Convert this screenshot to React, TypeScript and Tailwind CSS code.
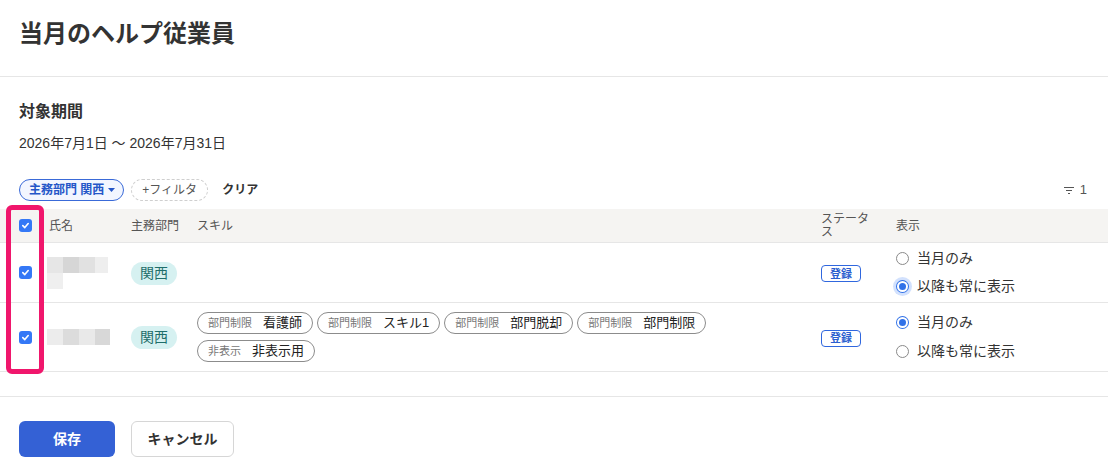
import React from 'react';

const font = { fontFamily: '"Liberation Sans", "Noto Sans CJK JP", "Noto Sans", sans-serif' };

const cols = 'grid grid-cols-[41px_82px_66px_1fr_75px_220px]';

type Skill = { label: string; value: string };

const rows: {
  name: { w: number; c: string }[][];
  skills: Skill[];
  display: 'month' | 'always';
  focus?: boolean;
}[] = [
  {
    name: [
      [
        { w: 16, c: '#e6e6e6' },
        { w: 16, c: '#d6d6d6' },
        { w: 16, c: '#e1e1e1' },
        { w: 13, c: '#eeeeee' },
      ],
      [{ w: 16, c: '#efefef' }],
    ],
    skills: [],
    display: 'always',
    focus: true,
  },
  {
    name: [
      [
        { w: 16, c: '#ececec' },
        { w: 16, c: '#dcdcdc' },
        { w: 16, c: '#e9e9e9' },
        { w: 15, c: '#d8d8d8' },
      ],
    ],
    skills: [
      { label: '部門制限', value: '看護師' },
      { label: '部門制限', value: 'スキル1' },
      { label: '部門制限', value: '部門脱却' },
      { label: '部門制限', value: '部門制限' },
      { label: '非表示', value: '非表示用' },
    ],
    display: 'month',
  },
];

function Checkbox() {
  return (
    <span className="flex h-[13px] w-[13px] items-center justify-center rounded-[3px] bg-[#3478f6]">
      <svg width="9" height="9" viewBox="0 0 10 10" fill="none">
        <path d="M2 5.2 L4.2 7.3 L8 2.8" stroke="white" strokeWidth="1.8" strokeLinecap="round" strokeLinejoin="round" />
      </svg>
    </span>
  );
}

function Radio({ checked, focus }: { checked: boolean; focus?: boolean }) {
  if (!checked) {
    return <span className="h-[13px] w-[13px] shrink-0 rounded-full border border-[#8a8a8a] bg-white" />;
  }
  return (
    <span
      className={
        'flex h-[13px] w-[13px] shrink-0 items-center justify-center rounded-full bg-[#3071e8] ' +
        (focus ? 'shadow-[0_0_0_3px_rgba(52,120,246,0.22)]' : '')
      }
    >
      <span className="flex h-[11px] w-[11px] items-center justify-center rounded-full bg-white">
        <span className="h-[7px] w-[7px] rounded-full bg-[#3071e8]" />
      </span>
    </span>
  );
}

function Blur({ lines }: { lines: { w: number; c: string }[][] }) {
  return (
    <div className="flex flex-col -ml-[2px]">
      {lines.map((line, i) => (
        <div key={i} className="flex">
          {line.map((b, j) => (
            <span key={j} className="h-[16px]" style={{ width: b.w, background: b.c }} />
          ))}
        </div>
      ))}
    </div>
  );
}

export default function App() {
  return (
    <div className="relative w-[1108px] h-[469px] overflow-hidden bg-white text-[#333]" style={font}>
      {/* Header */}
      <div className="h-[77px] border-b border-[#e6e6e6] px-[19px] pt-[18px]">
        <h1 className="text-[24px] leading-[32px] font-bold text-[#333]">当月のヘルプ従業員</h1>
      </div>

      {/* Period */}
      <div className="px-[19px] pt-[23px]">
        <h2 className="text-[16px] leading-[24px] font-bold">対象期間</h2>
        <p className="mt-[9px] text-[14px] leading-[20px]">2026年7月1日 〜 2026年7月31日</p>
      </div>

      {/* Filters */}
      <div className="mt-[26px] flex h-[22px] items-center pl-[19px] pr-[21px]">
        <span className="flex h-[22px] items-center gap-[4px] rounded-full border border-[#3a6ad8] bg-[#f2f6ff] pl-[9px] pr-[8px] text-[12px] font-bold text-[#2456c8]">
          主務部門 関西
          <svg width="7" height="4" viewBox="0 0 7 4">
            <path d="M0 0 L7 0 L3.5 4 Z" fill="#2456c8" />
          </svg>
        </span>
        <span className="ml-[7px] flex h-[22px] items-center rounded-full border border-dashed border-[#cfcfcf] px-[10px] text-[12px] text-[#555]">
          +フィルタ
        </span>
        <span className="ml-[14px] text-[12px] font-bold text-[#333]">クリア</span>
        <span className="ml-auto flex items-center gap-[6px] text-[13px] text-[#555]">
          <svg width="10" height="8" viewBox="0 0 10 8" fill="none" stroke="#555" strokeWidth="1">
            <path d="M0 1.5 H10 M2 4.5 H8 M4 7.5 H6" />
          </svg>
          1
        </span>
      </div>

      {/* Table */}
      <div className="mt-[8px]">
        <div className={cols + ' h-[34px] items-center border-b border-[#e6e6e6] bg-[#f5f4f2] text-[12px] text-[#555]'}>
          <div className="pl-[19px]">
            <Checkbox />
          </div>
          <div className="pl-[8px]">氏名</div>
          <div className="pl-[8px]">主務部門</div>
          <div className="pl-[8px]">スキル</div>
          <div className="pl-[8px]">
            <div className="w-[52px] leading-[13px] break-all">ステータス</div>
          </div>
          <div className="pl-[8px]">表示</div>
        </div>

        {rows.map((r, i) => (
          <div key={i} className={cols + ' items-center border-b border-[#e6e6e6]'}>
            <div className="pl-[19px]">
              <Checkbox />
            </div>
            <div className="pl-[8px]">
              <Blur lines={r.name} />
            </div>
            <div className="pl-[8px]">
              <span className="inline-flex h-[23px] items-center rounded-full bg-[#d6f1f1] px-[9px] text-[14px] text-[#1f6e6b]">
                関西
              </span>
            </div>
            <div className="pl-[8px]">
              {r.skills.length > 0 && (
                <div className="flex flex-wrap gap-x-[4px] gap-y-[6px] py-[9px]">
                  {r.skills.map((s, k) => (
                    <span
                      key={k}
                      className="flex h-[22px] items-center gap-[11px] rounded-full border border-[#8c8c8c] px-[10px]"
                    >
                      <span className="text-[11px] text-[#777]">{s.label}</span>
                      <span className="text-[13px] text-[#222]">{s.value}</span>
                    </span>
                  ))}
                </div>
              )}
            </div>
            <div className="pl-[8px]">
              <span className="inline-flex h-[17px] w-[40px] items-center justify-center rounded-[4px] border border-[#3067de] text-[11px] font-bold text-[#2c5fcf]">
                登録
              </span>
            </div>
            <div className="pl-[8px] py-[1px]">
              <label className="flex h-[28px] items-center gap-[8px] text-[14px] text-[#333]">
                <Radio checked={r.display === 'month'} focus={r.focus} />
                当月のみ
              </label>
              <label className="flex h-[29px] items-center gap-[8px] text-[14px] text-[#333]">
                <Radio checked={r.display === 'always'} focus={r.focus} />
                以降も常に表示
              </label>
            </div>
          </div>
        ))}
      </div>

      {/* Footer */}
      <div className="mt-[24px] border-t border-[#e6e6e6] px-[19px] pt-[24px]">
        <div className="flex gap-[16px]">
          <button className="h-[36px] w-[96px] rounded-[6px] bg-[#3461d5] text-[14px] font-bold text-white">保存</button>
          <button className="h-[36px] w-[103px] rounded-[6px] border border-[#d6d6d6] bg-white text-[14px] font-bold text-[#333]">
            キャンセル
          </button>
        </div>
      </div>

      {/* Annotation highlight */}
      <div className="absolute left-[6px] top-[205px] h-[169px] w-[38px] rounded-[6px] border-[5px] border-[#f0166c]" />
    </div>
  );
}
